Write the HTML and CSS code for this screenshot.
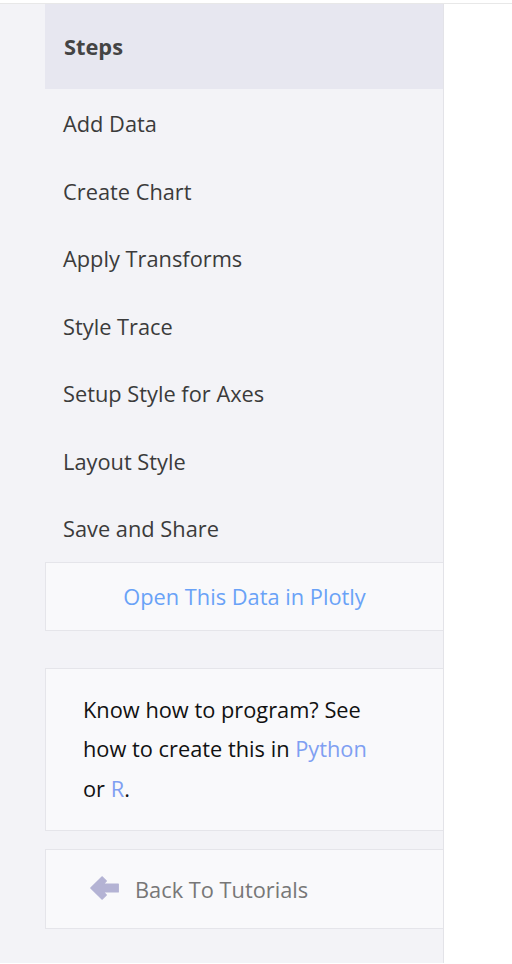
FILE: index.html
```html
<!DOCTYPE html>
<html>
<head>
<meta charset="utf-8">
<link rel="stylesheet" href="styles.css">
</head>
<body>
<div class="page">
  <aside class="sidebar">
    <div class="steps-head">Steps</div>
    <ul class="steps">
      <li>Add Data</li>
      <li>Create Chart</li>
      <li>Apply Transforms</li>
      <li>Style Trace</li>
      <li>Setup Style for Axes</li>
      <li>Layout Style</li>
      <li>Save and Share</li>
    </ul>
    <div class="box open-box"><a class="open-link">Open This Data in Plotly</a></div>
    <div class="box know-box">Know how to program? See how to create this in <a class="lang">Python</a> or <a class="lang">R</a>.</div>
    <div class="box back-box">
      <svg class="back-icon" viewBox="0 0 29 26" width="29" height="26"><path d="M0.8 13 L12 1.8 L16.3 6 L13.3 9 H28.3 V17 H13.3 L16.3 20 L12 24.2 Z" fill="#b4b3d4" stroke="#b4b3d4" stroke-width="1.2" stroke-linejoin="round"/></svg>
      <span class="back-text">Back To Tutorials</span>
    </div>
  </aside>
  <main class="content"></main>
</div>
</body>
</html>
```
FILE: styles.css
```css
html, body {
  margin: 0;
  padding: 0;
  background: #ffffff;
}
body {
  font-family: "Open Sans", "Liberation Sans", sans-serif;
  font-size: 21.8px;
}
.page {
  margin-top: 3px;
  border-top: 1px solid #e8e8e8;
  display: flex;
  height: 960px;
  box-sizing: border-box;
}
.sidebar {
  width: 444px;
  box-sizing: border-box;
  background: #f3f3f7;
  border-right: 1px solid #e3e3e8;
  padding-left: 45px;
  overflow: hidden;
}
.content {
  flex: 1;
  background: #ffffff;
}
.steps-head {
  background: #e7e7f0;
  height: 85px;
  box-sizing: border-box;
  padding-left: 19px;
  display: flex;
  align-items: center;
  font-weight: 700;
  color: #444444;
}
.steps {
  list-style: none;
  margin: 0;
  padding: 0;
}
.steps li {
  height: 67.5px;
  display: flex;
  align-items: center;
  padding-left: 18px;
  padding-top: 2px;
  color: #3b3b3b;
  box-sizing: border-box;
}
.box {
  background: #f9f9fb;
  border: 1px solid #e5e5ea;
  border-right: none;
  box-sizing: border-box;
}
.open-box {
  margin-top: 0;
  height: 69px;
  display: flex;
  align-items: center;
  justify-content: center;
}
.open-link {
  color: #69a2f7;
}
.know-box {
  margin-top: 37px;
  height: 163px;
  padding: 21px 66px 20px 37px;
  line-height: 39.5px;
  color: #111111;
}
.lang {
  color: #7f9ff2;
}
.back-box {
  margin-top: 18px;
  height: 80px;
  display: flex;
  align-items: center;
  padding-left: 44px;
  padding-top: 2px;
  gap: 16px;
}
.back-icon {
  display: block;
  margin-bottom: 3px;
}
.back-text {
  color: #777777;
}
```
